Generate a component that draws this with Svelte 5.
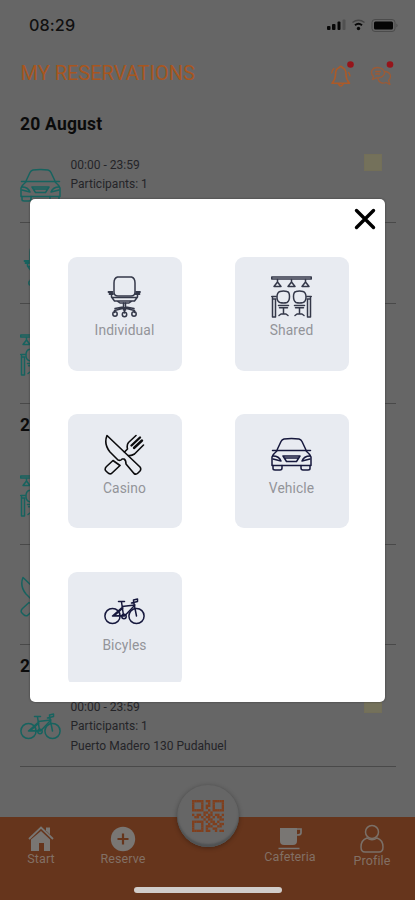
<script>
  const days = [
    { date: '20 August', rows: [
      { icon: 'car', h: 79, top: 21, time: '00:00 - 23:59', lines: ['Participants: 1'] },
      { icon: 'chair', h: 81, top: 22 },
      { icon: 'shared', h: 100, top: 30 }
    ] },
    { date: '21 August', rows: [
      { icon: 'shared', h: 100, top: 30 },
      { icon: 'cutlery', h: 100, top: 31 }
    ] },
    { date: '22 August', rows: [
      { icon: 'bike', h: 81, top: 20, time: '00:00 - 23:59', lines: ['Participants: 1', 'Puerto Madero 130 Pudahuel'] }
    ] }
  ];
  const options = [
    { name: 'Individual', icon: 'chair', ls: 0.1 },
    { name: 'Shared', icon: 'shared', ls: 0.1 },
    { name: 'Casino', icon: 'cutlery', ls: 0.1 },
    { name: 'Vehicle', icon: 'car', ls: 0.1 },
    { name: 'Bicyles', icon: 'bike', ls: 0.1 }
  ];
  const qr = [
    '11111011011111',
    '10001001010001',
    '10001011010001',
    '10001010010001',
    '11111001011111',
    '00000110100000',
    '10110101101101',
    '01101011010110',
    '00000101100011',
    '11111010110100',
    '10001001011011',
    '10001011100110',
    '10001010011000',
    '11111011001011'
  ];
  const cells = qr.flatMap((r, y) => [...r].map((c, x) => ({ x, y, on: c === '1' }))).filter((c) => c.on);
</script>

{#snippet icon(name)}
  <svg class="ico {name}" viewBox="0 0 41 42" width="41" height="42">
    {#if name === 'chair'}
      <path d="M13.500 1h14q3.500 1 3.500 6v9q0 4-4 4h-13q-4 0-4-4V7q0-5 3.500-6z" />
      <path d="M8.500 16H4.500M9 18H5.500M32 16h4M31.500 18h4" stroke-width="1.800" />
      <path d="M7.500 18v3l3 4h20l3-4v-3M8.500 21.500h24M13 25l3 2h9l3-2" />
      <path d="M19.500 27v7M21.500 27v7M20.500 32l-10 2.500v2M20.500 32l10 2.500v2M20.500 33v4M19 31l-8 1.500M22 31l8 1.500" />
      <circle cx="11" cy="38" r="2.200" /><circle cx="20.500" cy="38.500" r="2.200" /><circle cx="30" cy="38" r="2.200" />
    {:else if name === 'shared'}
      <path d="M.700 1h39.600v2H.700z" />
      <path d="M6.500 3.500v3M20.500 3.500v3M34.500 3.500v3M6.500 6l-3.500 4.500h7zM20.500 6L17 10.500h7zM34.500 6L31 10.500h7z" />
      <path d="M9 15.500q3.500-1 7 0 2.500.5 2.500 5t-2.500 6q-3.500 1-7 0-3-1-3-5.500t3-5.500zM25 15.500q3.500-1 7 0 3 1 3 5.500t-3 5.500q-3.500 1-7 0-2.500-1.500-2.500-6t2.500-5z" />
      <path d="M.700 20.500h4.500M40.300 20.500h-4.500M1.500 23h3.500M39.500 23H36M1.500 21v20M4.500 23v18h-3M39.500 21v20M36.500 23v18h3" />
      <path d="M7.500 29.500h10M23.500 29.500h10M8.500 31.800h8M24.500 31.800h8M12.500 32v6M28.500 32v6M8 39.500l2-1.500h5l2 1.500M24 39.500l2-1.500h5l2 1.500" />
    {:else if name === 'cutlery'}
      <path d="M3 1.500Q-.5 10 6 18l8 8q3 1 4-1h2q2 1 2 5l8 9.500q2 1.500 4-.5l2-2q1.500-2 0-4z" />
      <path d="M9 26.500l7 5-8.500 8q-2 1-4-1l-2-2q-1-2 1-4zM20.500 18l3-3q-1-4 1-6.500L32 1.500M24.500 21.500q3 .5 6-1.500l9-9" />
      <path d="M27.500 11.500L36 3.500M30 14l8-7.500" stroke-width="2.400" />
    {:else if name === 'car'}
      <path d="M6 16L10 7.500Q11 5.500 13 5q7.500-1 15 0 2 .5 3 2.500l4 8.500M7 16.500h27M6 17q-4 3-5 6v8.500h39V23q-1-3-5-6M1.500 16.500h3.500M39.500 16.500H36" />
      <path d="M12 22h17l-3.500 5.500h-10zM13.500 24h14M2 22q6 0 8 5l-8-2M39 22q-6 0-8 5l8-2" />
      <path d="M2 31.500v3q0 1.500 2 1.500h5q2 0 2-2v-2.500M39 31.500v3q0 1.500-2 1.500h-5q-2 0-2-2v-2.500" />
    {:else}
      <circle cx="8.500" cy="25" r="7.600" /><circle cx="32.500" cy="25" r="7.600" />
      <path d="M14.500 10.500h6M17.500 11l2 13.500L8.500 25l9-8M18 15.500L31 14M29.500 10l3 15M20.500 25L31 14M8.500 25h12M19 17l-9 8M27.500 12l6-1.500V8l-4 1" />
      <circle cx="20" cy="25.500" r="2.200" />
    {/if}
  </svg>
{/snippet}

<div class="screen">
  <div class="status">
    <span class="clock">08:29</span>
    <svg width="73" height="16" viewBox="0 0 73 16">
      <g fill="#080808"><rect x="1" y="9" width="3.500" height="4" rx="1" /><rect x="6" y="7" width="3.500" height="6" rx="1" /><rect x="11.500" y="4.500" width="3" height="8.500" rx="1" /></g>
      <rect x="16.500" y="2.500" width="3" height="10.500" rx="1" fill="#515151" />
      <path d="M26.500 5.500q6-4.500 12 0" fill="none" stroke="#444" stroke-width="1.500" />
      <path d="M29 8.200q3.500-2.800 7 0" fill="none" stroke="#080808" stroke-width="2" />
      <circle cx="32.500" cy="11.500" r="1.700" fill="#080808" />
      <rect x="46" y="2.500" width="23" height="12" rx="3" fill="none" stroke="#4b4b4b" />
      <rect x="48" y="4.500" width="19" height="8" rx="1.500" fill="#050505" />
      <path d="M70.500 6.500q2 2 0 4z" fill="#484848" />
    </svg>
  </div>

  <header>
    <h1>MY RESERVATIONS</h1>
    <svg class="bell" width="26" height="28" viewBox="0 0 26 28">
      <g fill="none" stroke="#ac5a28" stroke-width="1.600" stroke-linejoin="round" stroke-linecap="round">
        <path d="M9.500 6.500C6 7.500 5.500 10 5.500 13.500S4.500 19.500 2 22.300H19.500C17 19.500 16 17 16 13.500S15.500 7.500 12 6.500M9 6.500Q10.700 4 12.500 6.500M8.500 23Q10.700 27 13 23" />
        <path d="M4 7.500Q2 9 1.700 12M18.500 11.500Q19.800 13 20 15" stroke-width="1.200" />
      </g>
      <circle cx="20.500" cy="3.500" r="3.300" fill="#96141a" />
    </svg>
    <svg class="chat" width="26" height="28" viewBox="0 0 26 28">
      <g fill="none" stroke="#9c5b36" stroke-width="1.300" stroke-linejoin="round" stroke-linecap="round">
        <path d="M2.500 18.500L3.500 15.500C-.5 11.500 2 6.500 7.500 6.500S15.500 10.500 14 13.500 8 17 6 17ZM15.500 10.500C20.500 11 22 16 18.500 19.500L20 23.500 16 21.500C12 23 9 21.500 8 18" />
        <path d="M5.500 10.500h5M5.500 13h4" />
      </g>
      <circle cx="20" cy="3.500" r="3.300" fill="#96141a" />
    </svg>
  </header>

  <main>
    {#each days as day}
      <h2>{day.date}</h2>
      {#each day.rows as row}
        <section class="row" style="height: {row.h}px">
          <div class="pic" style="padding-top: {row.top}px">{@render icon(row.icon)}</div>
          {#if row.time}
            <div class="info">
              <p>{row.time}</p>
              {#each row.lines as line}<p>{line}</p>{/each}
            </div>
            <i class="mark"></i>
          {/if}
        </section>
      {/each}
    {/each}
  </main>

  <nav>
    <a class="start">
      <svg width="26" height="26" viewBox="0 0 26 26" fill="#797673">
        <path d="M18 1.500h4v7l-4-4z" /><path d="M1 13L13 1.500 25 13" fill="none" stroke="#797673" stroke-width="1.800" />
        <path d="M13 5l9 8.500V25h-6v-8h-5v8H3V13.500z" />
      </svg>
      <span>Start</span>
    </a>
    <a class="reserve">
      <svg width="26" height="26" viewBox="0 0 26 26"><circle cx="13" cy="13" r="12.200" fill="#797673" /><path d="M13 7.500v11M7.500 13h11" stroke="#66351c" stroke-width="2.200" /></svg>
      <span>Reserve</span>
    </a>
    <div class="gap"></div>
    <a class="cafe">
      <svg width="26" height="24" viewBox="0 0 26 24"><path d="M3 1h17v13q0 4-4 4H7q-4 0-4-4z" fill="#797673" /><path d="M20 2h4v4q0 2-4 2M1.500 21.500h21" fill="none" stroke="#797673" stroke-width="1.700" /></svg>
      <span>Cafeteria</span>
    </a>
    <a class="profile">
      <svg width="26" height="30" viewBox="0 0 26 30" fill="none" stroke="#7b7068" stroke-width="1.500"><circle cx="13" cy="8" r="6.500" /><path d="M8 14q-6 2-6 9 0 5 4 5h14q4 0 4-5 0-7-6-9-5 3.500-10 0z" /></svg>
      <span>Profile</span>
    </a>
    <div class="qr">
      <svg width="32" height="32" viewBox="0 0 14 14" fill="#803f1d">
        {#each cells as c}<rect x={c.x} y={c.y} width="1.030" height="1.030" />{/each}
      </svg>
    </div>
    <div class="home"></div>
  </nav>

  <div class="modal">
    <div class="close">
      <svg width="22" height="22" viewBox="0 0 22 22"><path d="M2.500 2.500l17 17M19.500 2.500l-17 17" stroke="#000" stroke-width="3.400" stroke-linecap="round" /></svg>
    </div>
    <div class="grid">
      {#each options as o}
        <button class="tile">
          {@render icon(o.icon)}
          <span style="letter-spacing: {o.ls}px">{o.name}</span>
        </button>
      {/each}
    </div>
  </div>
</div>

<style>
  :global(body) { margin: 0; background: #666; }
  .screen { position: relative; display: flex; flex-direction: column; width: 415px; height: 900px; overflow: hidden; background: #666; font-family: Roboto, "Liberation Sans", sans-serif; color: #0b0b0b; }
  .status { display: flex; justify-content: space-between; align-items: center; height: 50px; padding: 0 16px 0 29px; box-sizing: border-box; }
  .clock { font: 500 16.200px/20px Inter, sans-serif; letter-spacing: .1px; color: #101010; }
  header { display: flex; align-items: center; height: 45px; padding: 0 19px 0 20.500px; }
  h1 { flex: 1; margin: 0; font-size: 20px; font-weight: 400; line-height: 24px; letter-spacing: 0; color: #a8561f; }
  .bell, .chat { flex: none; margin-top: 5px; }
  .bell { margin-right: 14.500px; }
  main { flex: 1; padding: 9px 19px 0 20px; }
  h2 { height: 40px; margin: 0; font-size: 17.500px; font-weight: 700; line-height: 41px; letter-spacing: .2px; }
  h2:not(:first-child) { height: 41px; line-height: 42px; }
  .row { display: flex; align-items: flex-start; box-sizing: border-box; border-bottom: 1px solid #494949; overflow: hidden; }
  .pic { width: 50.500px; }
  .info { flex: 1; padding-top: 11.500px; }
  .info p { margin: 0; font-size: 12px; line-height: 19.700px; letter-spacing: .02px; color: #242428; }
  .mark { width: 16px; height: 15px; margin: 10px 14px 0 0; border: 1px solid #736f58; background: #74715b; box-sizing: content-box; }
  .ico { display: block; fill: none; stroke-width: 1.500; stroke-linejoin: round; stroke-linecap: round; }
  .row .ico { stroke: #17635f; }
  nav { position: relative; display: flex; height: 83px; background: #66351c; box-sizing: border-box; }
  nav a { display: flex; flex-direction: column; align-items: center; width: 82px; box-sizing: border-box; padding-top: 9px; color: #827065; font-size: 12.500px; line-height: 14px; letter-spacing: .1px; }
  .cafe span { margin-top: -1px; }
  .gap { width: 85px; }
  .cafe { padding-top: 10px; }
  nav .profile { padding-top: 7px; }
  .qr { position: absolute; left: 177px; top: -32px; width: 62px; height: 62px; border-radius: 50%; display: flex; align-items: center; justify-content: center; background: #666; box-shadow: inset 0 -3px 2px #505253, 0 1px 5px #0005; }
  .home { position: absolute; left: 134px; top: 70px; width: 148px; height: 6px; border-radius: 3px; background: #d1cdca; }
  .modal { position: absolute; left: 30px; top: 199px; width: 355px; height: 502.500px; border-radius: 5px; background: #fff; box-shadow: 0 0 2px #333; }
  .close { display: flex; justify-content: flex-end; height: 57.500px; box-sizing: border-box; padding: 9px 9px 0 0; }
  .grid { display: grid; grid-template-columns: 114px 114px; grid-auto-rows: 114px; gap: 43.700px 53px; height: 425px; padding-left: 37.500px; overflow: hidden; }
  .tile { display: flex; flex-direction: column; align-items: center; padding: 19.500px 0 0; border: 0; border-radius: 9px; background: #e8ebf1; font: 400 13.800px/18px Roboto, sans-serif; color: #939499; }
  .tile span { margin-top: 3px; }
  .tile .ico { stroke: #343849; }
  .tile .car, .tile .bike { stroke: #16183d; }
  .tile .cutlery { stroke: #0b0b0d; stroke-width: 1.600; }
</style>
